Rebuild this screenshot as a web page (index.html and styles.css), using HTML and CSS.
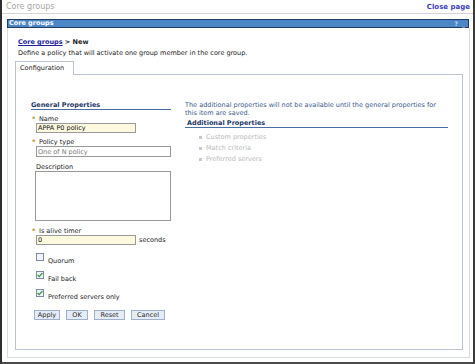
FILE: index.html
```html
<!DOCTYPE html>
<html>
	<head>
		<meta charset="utf-8">
		<title>Core groups</title>
		<link rel="stylesheet" href="styles.css">
	</head>
	<body>
		<div class="frame">
			<div class="page-head">
				<span class="page-title">Core groups</span>
				<a class="close" href="#">Close page</a>
			</div>
			<div class="portlet">
				<div class="portlet-title">
					<span>Core groups</span>
					<span class="tools">? <span class="min">_</span></span>
				</div>
				<div class="portlet-body">
					<p class="crumbs"><a href="#">Core groups</a> &gt; New</p>
					<p class="intro">Define a policy that will activate one group member in the core group.</p>
					<div class="tabs">
						<span class="tab">Configuration</span>
					</div>
					<div class="panel">
						<div class="col-left">
							<h3 class="heading">General Properties</h3>
							<div class="field f-name">
								<label><span class="req">*</span>Name</label>
								<input class="txt short req-bg" type="text" value="APPA P0 policy">
							</div>
							<div class="field f-type">
								<label><span class="req">*</span>Policy type</label>
								<input class="txt long ro" type="text" value="One of N policy">
							</div>
							<div class="field f-desc">
								<label class="plain">Description</label>
								<textarea class="area"></textarea>
							</div>
							<div class="field f-timer">
								<label><span class="req">*</span>Is alive timer</label>
								<div class="inline">
									<input class="txt short req-bg" type="text" value="0">
									<span class="unit">seconds</span>
								</div>
							</div>
							<div class="check first">
								<span class="box"></span><span class="check-label">Quorum</span>
							</div>
							<div class="check">
								<span class="box"><svg width="8" height="8" viewBox="0 0 8 8"><polyline points="1.6,4 3.2,5.6 6.4,2" fill="none" stroke="#3c9a3c" stroke-width="1.3"/></svg></span><span class="check-label">Fail back</span>
							</div>
							<div class="check">
								<span class="box"><svg width="8" height="8" viewBox="0 0 8 8"><polyline points="1.6,4 3.2,5.6 6.4,2" fill="none" stroke="#3c9a3c" stroke-width="1.3"/></svg></span><span class="check-label">Preferred servers only</span>
							</div>
							<div class="buttons">
								<button class="btn b-apply">Apply</button>
								<button class="btn b-ok">OK</button>
								<button class="btn b-reset">Reset</button>
								<button class="btn b-cancel">Cancel</button>
							</div>
						</div>
						<div class="col-right">
							<p class="note">The additional properties will not be available until the general properties for this item are saved.</p>
							<h3 class="heading sub">Additional Properties</h3>
							<ul class="links">
								<li>Custom properties</li>
								<li>Match criteria</li>
								<li>Preferred servers</li>
							</ul>
						</div>
					</div>
				</div>
			</div>
		</div>
	</body>
</html>
```
FILE: styles.css
```css
html, body {
	margin: 0;
	background: #fff;
}
body {
	font-family: "DejaVu Sans", Verdana, sans-serif;
	font-size: 6.5px;
	color: #222;
}
.frame {
	background: #fff;
	border-bottom: 2px solid #4a4a4a;
	border-left: 2px solid #2e2e2e;
	border-right: 2px solid #3a3a3a;
	box-sizing: border-box;
	height: 364px;
	width: 475px;
}
.page-head {
	align-items: center;
	border-bottom: 1px solid #d4d4d4;
	display: flex;
	height: 13px;
	justify-content: space-between;
	padding: 0 3px 0 4px;
}
.page-title {
	color: #a6a6a6;
	font-size: 8px;
}
.close {
	color: #3d3dc2;
	font-size: 7px;
	font-weight: bold;
	text-decoration: none;
}
.portlet {
	margin: 5px 3px 0 5px;
}
.portlet-title {
	align-items: center;
	background: #4b86c6;
	border: 1px solid #223c62;
	box-sizing: border-box;
	color: #fff;
	display: flex;
	font-weight: bold;
	height: 9px;
	justify-content: space-between;
	line-height: 7px;
	margin-right: 1px;
	padding: 0 3px 0 1px;
}
.tools {
	color: #c8d8ec;
	font-size: 6px;
}
.min {
	margin-left: 2px;
}
.portlet-body {
	border: 1px solid #d6dce4;
	border-top: 0;
	box-sizing: border-box;
	height: 330px;
	padding: 10px 6px 0 7px;
}
.crumbs, .intro {
	line-height: 8px;
	margin: 0 0 0 3px;
}
.crumbs {
	font-weight: bold;
}
.crumbs a {
	color: #23239c;
}
.intro {
	margin-top: 3px;
}
.tabs {
	display: flex;
	margin-top: 4px;
}
.tab {
	background: #fff;
	border: 1px solid #b9c4d0;
	border-bottom: 0;
	height: 13px;
	line-height: 13px;
	margin-bottom: -1px;
	padding: 0 5px 0 4px;
	position: relative;
	width: 48px;
}
.panel {
	border: 1px solid #b9c4d0;
	box-sizing: border-box;
	display: flex;
	height: 276px;
	padding: 26px 0 0 15px;
}
.col-left {
	width: 140px;
}
.col-right {
	margin-left: 14px;
	width: 263px;
}
.heading {
	border-bottom: 1px solid #4a6ea3;
	color: #1d3766;
	font-size: 6.5px;
	font-weight: bold;
	height: 8px;
	line-height: 8px;
	margin: 0;
}
.heading.sub {
	margin-top: 2px;
	padding-left: 2px;
}
.note {
	color: #3a5a8c;
	line-height: 8px;
	margin: 0;
}
.field label {
	display: block;
	height: 8px;
	line-height: 8px;
	padding-left: 1px;
}
.field label.plain {
	padding-left: 5px;
}
.req {
	color: #b08a1a;
	display: inline-block;
	font-weight: bold;
	width: 7px;
}
.f-name {
	margin-top: 5px;
}
.f-type {
	margin-top: 5px;
}
.f-desc {
	margin-top: 6px;
}
.f-timer {
	margin-top: 6px;
}
.txt {
	border: 1px solid #9a9a9a;
	box-sizing: border-box;
	display: block;
	font-family: inherit;
	font-size: 6.5px;
	height: 10px;
	margin: 0 0 0 5px;
	padding: 0 1px;
}
.txt.short {
	width: 100px;
}
.txt.long {
	height: 11px;
	width: 135px;
}
.req-bg {
	background: #fcf9df;
	color: #111;
}
.ro {
	background: #fff;
	color: #7a7a7a;
}
.area {
	border: 1px solid #9a9a9a;
	box-sizing: border-box;
	display: block;
	height: 50px;
	margin: 0 0 0 4px;
	resize: none;
	width: 136px;
}
.inline {
	align-items: center;
	display: flex;
}
.unit {
	margin-left: 3px;
}
.check {
	align-items: flex-end;
	display: flex;
	height: 8px;
	margin: 10px 0 0 5px;
}
.check.first {
	margin-top: 8px;
}
.box {
	background: #f2f4fa;
	border: 1px solid #7f8ba0;
	box-sizing: border-box;
	display: block;
	height: 8px;
	width: 8px;
}
.box svg {
	display: block;
	margin: -1px 0 0 -1px;
}
.check-label {
	line-height: 8px;
	margin: 0 0 -4px 4px;
}
.buttons {
	display: flex;
	gap: 6px;
	margin: 13px 0 0 3px;
}
.btn {
	background: #e6ecf6;
	border: 1px solid #9fb0cc;
	box-sizing: border-box;
	color: #2a2a2a;
	font-family: inherit;
	font-size: 6.5px;
	height: 10px;
	line-height: 8px;
	padding: 0;
}
.b-apply {
	width: 26px;
}
.b-ok {
	width: 22px;
}
.b-reset {
	width: 31px;
}
.b-cancel {
	width: 34px;
}
.links {
	list-style: none;
	margin: 4px 0 0;
	padding: 0 0 0 14px;
}
.links li {
	color: #b9b9b9;
	line-height: 11px;
}
.links li:before {
	background: #c8c8c8;
	content: "";
	display: inline-block;
	height: 3px;
	margin-right: 4px;
	vertical-align: middle;
	width: 3px;
}
```
